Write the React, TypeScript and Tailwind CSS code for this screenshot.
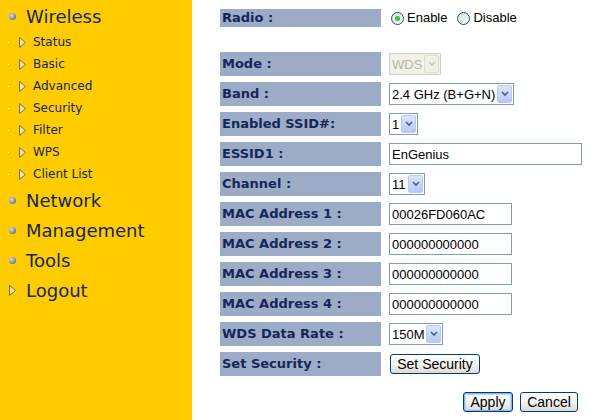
import React from "react";

const navy = "text-[#14275a]";
const arial = { fontFamily: '"Liberation Sans", Arial, sans-serif' };

function Sphere() {
  return (
    <span className="inline-block w-[7px] h-[7px] rounded-full bg-[radial-gradient(circle_at_35%_35%,#d8dde6,#6f7d93_70%,#4b5568)]" />
  );
}

function Tri({ className = "" }: { className?: string }) {
  return (
    <svg width="7" height="11" viewBox="0 0 7 11" className={className}>
      <path d="M0.5 0.5 L6.5 5.5 L0.5 10.5 Z" fill="#ffe680" stroke="#6b6f80" strokeWidth="1" />
    </svg>
  );
}

function MainItem({ label, tri }: { label: string; tri?: boolean }) {
  return (
    <div className="h-[30px] flex items-center">
      <div className="w-[26px] flex justify-center pr-[2px]">{tri ? <Tri /> : <Sphere />}</div>
      <span className={`text-[18px] ${navy}`}>{label}</span>
    </div>
  );
}

function SubItem({ label }: { label: string }) {
  return (
    <div className="h-[22px] flex items-center">
      <span className="ml-[8px] w-[1px] h-[1px] bg-white" />
      <Tri className="ml-[10px]" />
      <span className={`ml-[7px] text-[12px] ${navy}`}>{label}</span>
    </div>
  );
}

function Arrow({ disabled }: { disabled?: boolean }) {
  return (
    <span
      className={
        "w-[15px] h-[18px] my-[1px] mr-[1px] flex items-center justify-center rounded-[2px] " +
        (disabled
          ? "bg-[#f1efe6] border border-[#e0ddd0]"
          : "bg-gradient-to-b from-[#dbe6fd] to-[#b5c9f5] border border-[#b9caf0]")
      }
    >
      <svg width="8" height="6" viewBox="0 0 8 6">
        <path d="M1 1 L4 4 L7 1" fill="none" stroke={disabled ? "#c9c6b8" : "#4d6185"} strokeWidth="1.6" />
      </svg>
    </span>
  );
}

function Select({ value, w, disabled }: { value: string; w: string; disabled?: boolean }) {
  return (
    <div
      className={`h-[22px] ${w} flex items-center justify-between border ${
        disabled ? "border-[#d3d0c2] bg-[#f3f1e8] text-[#b8b5a6]" : "border-[#7f9db9] bg-white text-black"
      }`}
      style={arial}
    >
      <span className="pl-[2px] text-[13px] leading-none whitespace-nowrap">{value}</span>
      <Arrow disabled={disabled} />
    </div>
  );
}

function Input({ value, w }: { value: string; w: string }) {
  return (
    <div className={`h-[22px] ${w} flex items-center border border-[#7f9db9] bg-white`} style={arial}>
      <span className="pl-[2px] text-[13px] leading-none text-black">{value}</span>
    </div>
  );
}

function Btn({ label, w, def }: { label: string; w: string; def?: boolean }) {
  return (
    <div
      className={`h-[20px] ${w} flex items-center justify-center rounded-[3px] border border-[#003c74] bg-gradient-to-b from-white via-[#f4f4f0] to-[#dcdad2] text-[14px] text-black ${
        def ? "shadow-[inset_0_0_0_1px_#8fb1ec,inset_0_0_0_2px_#c7d7f6]" : ""
      }`}
      style={arial}
    >
      {label}
    </div>
  );
}

function Radio({ on }: { on?: boolean }) {
  return (
    <span className="w-[13px] h-[13px] rounded-full border border-[#1c5180] bg-gradient-to-br from-[#dcdcd6] to-white flex items-center justify-center">
      {on && <span className="w-[5px] h-[5px] rounded-full bg-[radial-gradient(circle,#4ddb4d,#21a121)]" />}
    </span>
  );
}

function Label({ text, h }: { text: string; h: string }) {
  return (
    <div className={`w-[161px] ${h} bg-[#9cacc6] flex items-center pl-[2px] text-[13px] font-bold ${navy}`}>
      {text}
    </div>
  );
}

function Row({ label, children }: { label: string; children: React.ReactNode }) {
  return (
    <div className="h-[24px] flex items-center">
      <Label text={label} h="h-full" />
      <div className="ml-[8px] flex items-center">{children}</div>
    </div>
  );
}

export default function App() {
  return (
    <div
      className="w-[596px] h-[420px] flex bg-white overflow-hidden"
      style={{ fontFamily: '"DejaVu Sans", Verdana, sans-serif' }}
    >
      <div className="w-[192px] h-full bg-[#ffcc00] pt-[2px] flex flex-col">
        <div className="h-[29px] flex items-center">
          <div className="w-[26px] flex justify-center pr-[2px]">
            <Sphere />
          </div>
          <span className={`text-[18px] ${navy}`}>Wireless</span>
        </div>
        {["Status", "Basic", "Advanced", "Security", "Filter", "WPS", "Client List"].map((s) => (
          <SubItem key={s} label={s} />
        ))}
        <MainItem label="Network" />
        <MainItem label="Management" />
        <MainItem label="Tools" />
        <MainItem label="Logout" tri />
      </div>

      <div className="pl-[28px] pt-[9px] flex flex-col">
        <div className="h-[18px] flex items-center">
          <Label text="Radio :" h="h-full" />
          <div className="ml-[10px] flex items-center text-[13px] text-black" style={arial}>
            <Radio on />
            <span className="ml-[3px]">Enable</span>
            <span className="ml-[10px]" />
            <Radio />
            <span className="ml-[3px]">Disable</span>
          </div>
        </div>

        <div className="mt-[25px] flex flex-col gap-[6px]">
          <Row label="Mode :">
            <Select value="WDS" w="w-[52px]" disabled />
          </Row>
          <Row label="Band :">
            <Select value="2.4 GHz (B+G+N)" w="w-[125px]" />
          </Row>
          <Row label="Enabled SSID#:">
            <Select value="1" w="w-[29px]" />
          </Row>
          <Row label="ESSID1 :">
            <Input value="EnGenius" w="w-[193px]" />
          </Row>
          <Row label="Channel :">
            <Select value="11" w="w-[36px]" />
          </Row>
          {[
            ["MAC Address 1 :", "00026FD060AC"],
            ["MAC Address 2 :", "000000000000"],
            ["MAC Address 3 :", "000000000000"],
            ["MAC Address 4 :", "000000000000"],
          ].map(([l, v]) => (
            <Row key={l} label={l}>
              <Input value={v} w="w-[123px]" />
            </Row>
          ))}
          <Row label="WDS Data Rate :">
            <Select value="150M" w="w-[54px]" />
          </Row>
          <Row label="Set Security :">
            <div className="ml-[1px]">
              <Btn label="Set Security" w="w-[90px]" />
            </div>
          </Row>
        </div>

        <div className="mt-[16px] flex justify-end gap-[7px] w-[358px]">
          <Btn label="Apply" w="w-[50px]" def />
          <Btn label="Cancel" w="w-[58px]" />
        </div>
      </div>
    </div>
  );
}
